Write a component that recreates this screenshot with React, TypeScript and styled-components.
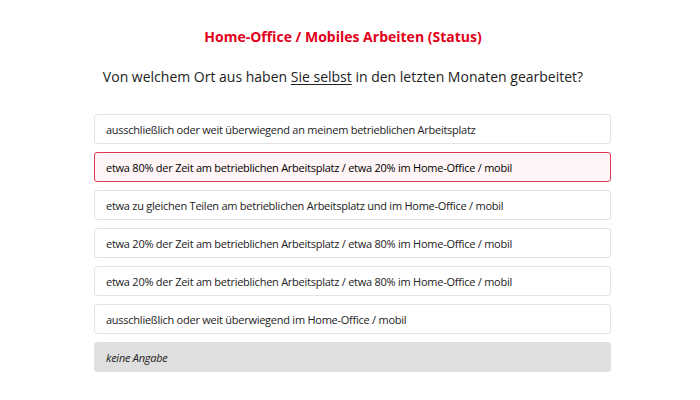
import styled, { createGlobalStyle } from "styled-components";

const GlobalStyle = createGlobalStyle`
  html, body {
    margin: 0;
    padding: 0;
    background: #ffffff;
  }
  body {
    font-family: "Open Sans", "DejaVu Sans", sans-serif;
    color: #333333;
  }
`;

const options = [
  "ausschließlich oder weit überwiegend an meinem betrieblichen Arbeitsplatz",
  "etwa 80% der Zeit am betrieblichen Arbeitsplatz / etwa 20% im Home-Office / mobil",
  "etwa zu gleichen Teilen am betrieblichen Arbeitsplatz und im Home-Office / mobil",
  "etwa 20% der Zeit am betrieblichen Arbeitsplatz / etwa 80% im Home-Office / mobil",
  "etwa 20% der Zeit am betrieblichen Arbeitsplatz / etwa 80% im Home-Office / mobil",
  "ausschließlich oder weit überwiegend im Home-Office / mobil",
];

export default function App(): JSX.Element {
  const selected = 1;
  return (
    <>
      <GlobalStyle />
      <Page>
        <Title>Home-Office / Mobiles Arbeiten (Status)</Title>
        <Question>
          Von welchem Ort aus haben <u>Sie selbst</u> in den letzten Monaten gearbeitet?
        </Question>
        <OptionList>
          {options.map((text, i) => (
            <Option key={i} $selected={i === selected}>
              {text}
            </Option>
          ))}
          <NoAnswer>keine Angabe</NoAnswer>
        </OptionList>
      </Page>
    </>
  );
}

/* ---------- styles ---------- */

const Page = styled.div`
  width: 686px;
  padding-top: 26px;
`;

const Title = styled.h1`
  margin: 0;
  text-align: center;
  font-size: 14px;
  font-weight: 700;
  line-height: 22px;
  color: #e2001a;
`;

const Question = styled.p`
  margin: 18px 0 0;
  text-align: center;
  font-size: 14px;
  line-height: 22px;
  color: #222222;

  u {
    text-decoration-thickness: 1px;
    text-underline-offset: 2px;
  }
`;

const OptionList = styled.div`
  display: flex;
  flex-direction: column;
  gap: 8px;
  margin: 26px 0 0 94px;
  width: 517px;
`;

const Option = styled.div<{ $selected?: boolean }>`
  box-sizing: border-box;
  height: 30px;
  display: flex;
  align-items: center;
  padding: 0 11px;
  font-size: 11px;
  letter-spacing: -0.25px;
  color: ${(p) => (p.$selected ? "#000000" : "#222222")};
  background: ${(p) => (p.$selected ? "#fff5f6" : "#ffffff")};
  border: 1px solid ${(p) => (p.$selected ? "#e5374f" : "#e3e3e6")};
  border-radius: 3px;
`;

const NoAnswer = styled(Option)`
  font-style: italic;
  background: #dfdfdf;
  border-color: #dfdfdf;
`;
